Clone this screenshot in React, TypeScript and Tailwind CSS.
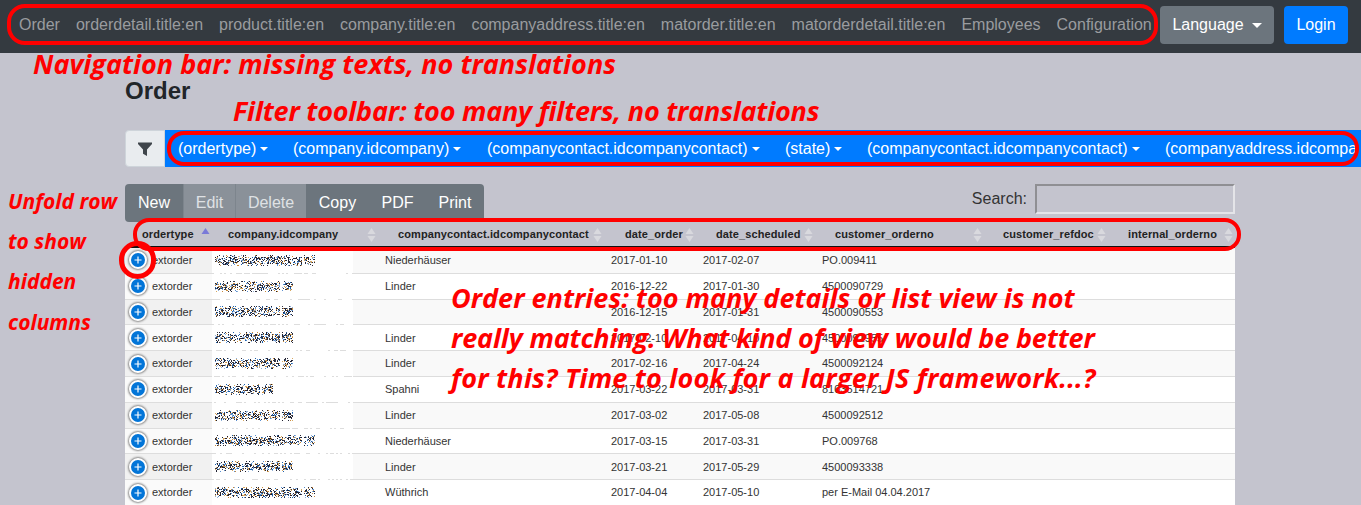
import React from "react";

const navLinks = ["Order", "orderdetail.title:en", "product.title:en", "company.title:en", "companyaddress.title:en", "matorder.title:en", "matorderdetail.title:en", "Employees", "Configuration"];
const filters = [
  { label: "(ordertype)", w: "w-[115px]" },
  { label: "(company.idcompany)", w: "w-[194px]" },
  { label: "(companycontact.idcompanycontact)", w: "w-[298px]" },
  { label: "(state)", w: "w-[82px]" },
  { label: "(companycontact.idcompanycontact)", w: "w-[298px]" },
  { label: "(companyaddress.idcompanyaddress)", w: "w-[191px] overflow-hidden" },
];
const headers = [
  { t: "ordertype", cls: "pl-[17px]", sort: "asc" },
  { t: "company.idcompany", cls: "pl-[16px]" },
  { t: "companycontact.idcompanycontact", cls: "pl-[20px]" },
  { t: "date_order", cls: "pl-[21px]" },
  { t: "date_scheduled", cls: "pl-[20px]" },
  { t: "customer_orderno", cls: "pl-[20px]" },
  { t: "customer_refdoc", cls: "pl-[19px]" },
  { t: "internal_orderno", cls: "pl-[20px]" },
];
const rows = [
  [100, "Niederhäuser", "2017-01-10", "2017-02-07", "PO.009411"],
  [78, "Linder", "2016-12-22", "2017-01-30", "4500090729"],
  [78, "", "2016-12-15", "2017-01-31", "4500090553"],
  [78, "Linder", "2017-02-10", "2017-04-10", "4500091955"],
  [78, "Linder", "2017-02-16", "2017-04-24", "4500092124"],
  [58, "Spahni", "2017-03-22", "2017-03-31", "8103514721"],
  [78, "Linder", "2017-03-02", "2017-05-08", "4500092512"],
  [100, "Niederhäuser", "2017-03-15", "2017-03-31", "PO.009768"],
  [78, "Linder", "2017-03-21", "2017-05-29", "4500093338"],
  [100, "Wüthrich", "2017-04-04", "2017-05-10", "per E-Mail 04.04.2017"],
] as const;

function rng(seed: number) {
  let s = seed * 9301 + 49297;
  return () => {
    s = (s * 9301 + 49297) % 233280;
    return s / 233280;
  };
}

function Noise({ width, seed }: { width: number; seed: number }) {
  const r = rng(seed);
  const colors = ["#1f1f2e", "#2b2b3a", "#1f1f2e", "#3a3a48", "#1c5fa8", "#c98a3a", "#2b2b3a", "#8fb0d8", "#d8a860", "#5a8fd0"];
  const gap = width - 14;
  const cells: React.ReactElement[] = [];
  for (let x = 0; x < width; x++) {
    if (x > gap && x < gap + 3) continue;
    for (let y = 0; y < 11; y++) {
      const edge = y < 2 || y > 8;
      if (r() < (edge ? 0.22 : 0.5)) {
        cells.push(<rect key={x + "-" + y} x={x} y={y} width="1" height="1" fill={colors[Math.floor(r() * colors.length)]} />);
      }
    }
  }
  return (
    <svg width={width} height="11" className="block" shapeRendering="crispEdges">
      {cells}
    </svg>
  );
}

function Haze({ seed }: { seed: number }) {
  const r = rng(seed);
  const cells: React.ReactElement[] = [];
  for (let x = 0; x < 141; x += 2) {
    if (r() < 0.6) cells.push(<rect key={x} x={x} y={r() < 0.5 ? 0 : 1} width="2" height="2" fill="#ffffff" />);
  }
  return (
    <svg width="141" height="3" className="absolute bottom-[-2px] left-0" shapeRendering="crispEdges">
      {cells}
    </svg>
  );
}

function SortIcon({ active }: { active?: boolean }) {
  return (
    <svg width="9" height="16" viewBox="0 0 9 16" className="absolute right-[2px] top-[5px]">
      <path d="M4.5 1 L8.5 7 L0.5 7 Z" fill={active ? "#7a7ad8" : "#d9d9de"} />
      {!active && <path d="M4.5 15 L8.5 9 L0.5 9 Z" fill="#d9d9de" />}
    </svg>
  );
}

function Caret({ size = "sm" }: { size?: "sm" | "lg" }) {
  return (
    <span className={size === "lg" ? "ml-[8px] inline-block border-x-[5px] border-t-[5px] border-x-transparent border-t-white align-[3px]" : "ml-[4px] inline-block border-x-[4px] border-t-[4px] border-x-transparent border-t-white align-[3px]"} />
  );
}

const grid = "grid grid-cols-[87px_166px_226px_92px_119px_169px_124px_127px]";
const note = "absolute whitespace-nowrap font-['Open_Sans',sans-serif] font-bold italic text-[#ff0000]";
const ring = "pointer-events-none absolute border-[4px] border-[#ff0000]";

export default function App() {
  return (
    <div className="relative h-[505px] overflow-hidden bg-[#c4c4ce] font-['Liberation_Sans',Arial,sans-serif] text-[#212529]">
      <nav className="flex h-[53px] items-start bg-[#343a40] pl-[11px] pr-[13px] pt-[6px]">
        <div className="flex h-[38px] flex-1 items-center text-[16px] text-[#9a9c9f]">
          {navLinks.map((l) => (
            <span key={l} className="whitespace-nowrap px-[8px]">{l}</span>
          ))}
        </div>
        <button className="mr-[10px] flex h-[38px] w-[114px] items-center justify-center rounded-[4px] bg-[#6c757d] text-[16px] text-white">
          Language<Caret size="lg" />
        </button>
        <button className="h-[38px] w-[64px] rounded-[4px] bg-[#007bff] text-[16px] text-white">Login</button>
      </nav>

      <main className="pl-[125px]">
        <h1 className="mt-[24px] h-[53px] text-[24px] font-bold leading-[28px]">Order</h1>
        <div className="flex h-[37px] overflow-hidden">
          <div className="flex w-[40px] shrink-0 items-center justify-center rounded-l-[4px] border border-[#ced4da] bg-[#e9ecef]">
            <svg width="16" height="16" viewBox="0 0 16 16"><path d="M1 1.5 H15 V3 L10 8.5 V15 L6 12.8 V8.5 L1 3 Z" fill="#3f454b" /></svg>
          </div>
          <div className="flex flex-1 items-center overflow-hidden bg-[#007bff] pl-[13px] text-[16px] text-white">
            {filters.map((f, i) => (
              <span key={i} className={"shrink-0 whitespace-nowrap " + f.w}>
                {f.label}
                {i < 5 && <Caret />}
              </span>
            ))}
          </div>
        </div>

        <div className="w-[1110px]">
          <div className="mt-[17px] flex h-[38px] items-start justify-between">
            <div className="flex h-[38px] overflow-hidden rounded-[4px] text-[16px]">
              <button className="w-[58px] bg-[#6c757d] text-white">New</button>
              <button className="w-[52px] border-l border-[#7d858d] bg-[#8a9199] text-[#dfe1e4]">Edit</button>
              <button className="w-[71px] border-l border-[#7d858d] bg-[#8a9199] text-[#dfe1e4]">Delete</button>
              <button className="w-[63px] bg-[#6c757d] text-white">Copy</button>
              <button className="w-[57px] bg-[#6c757d] text-white">PDF</button>
              <button className="w-[58px] bg-[#6c757d] text-white">Print</button>
            </div>
            <label className="flex h-[30px] items-center text-[16px] text-[#333]">
              Search:
              <span className="ml-[8px] block h-[30px] w-[200px] border-2 border-b-[#e4e4e8] border-l-[#8f8f93] border-r-[#e4e4e8] border-t-[#8f8f93]" />
            </label>
          </div>

          <div className={grid + " h-[26px] border-b-2 border-[#111] text-[11px] font-bold tracking-[0.1px] text-[#222]"}>
            {headers.map((h) => (
              <div key={h.t} className={"relative flex items-center whitespace-nowrap " + h.cls}>
                {h.t}
                <SortIcon active={h.sort === "asc"} />
              </div>
            ))}
          </div>

          {rows.map((r, i) => (
            <div key={i} className={grid + " h-[25.8px] items-stretch border-b border-[#dddddd] text-[11px] text-[#333] " + (i % 2 === 0 ? "bg-[#f9f9f9]" : "bg-white")}>
              <div className={"flex items-center pl-[4px] " + (i % 2 === 0 ? "bg-[#f1f1f1]" : "bg-[#fafafa]")}>
                <span className="mr-[5px] flex h-[18px] w-[18px] items-center justify-center rounded-full border-[2px] border-white bg-[#0275d8] shadow-[0_0_2px_1px_#888]">
                  <svg width="8" height="8" viewBox="0 0 8 8"><path d="M4 0.5 V7.5 M0.5 4 H7.5" stroke="#ffffff" strokeWidth="1.2" /></svg>
                </span>
                extorder
              </div>
              <div className="relative">
                <div className="flex h-full w-[141px] items-center bg-white pl-[3px]">
                  <Noise width={r[0] as number} seed={i * 37 + 11} />
                </div>
                {i < 9 && <Haze seed={i * 13 + 5} />}
              </div>
              <div className="flex items-center pl-[7px]">{r[1]}</div>
              <div className="flex items-center pl-[7px]">{r[2]}</div>
              <div className="flex items-center pl-[7px]">{r[3]}</div>
              <div className="flex items-center whitespace-nowrap pl-[7px]">{r[4]}</div>
              <div />
              <div />
            </div>
          ))}
        </div>
      </main>

      <div className={ring + " left-[7px] top-[4px] h-[41px] w-[1151px] rounded-[18px]"} />
      <div className={ring + " left-[167px] top-[131px] h-[35px] w-[1192px] rounded-[17px]"} />
      <div className={ring + " left-[133px] top-[218px] h-[33px] w-[1108px] rounded-[16px]"} />
      <div className={ring + " left-[119px] top-[241px] h-[38px] w-[37px] rounded-full border-[5px]"} />

      <div className={note + " left-[33px] top-[45px] text-[27px] leading-[38px]"}>Navigation bar: missing texts, no translations</div>
      <div className={note + " left-[233px] top-[92px] text-[27px] leading-[38px] tracking-[-0.22px]"}>Filter toolbar: too many filters, no translations</div>
      <div className={note + " left-[8px] top-[186px] text-[21px] leading-[30px]"}>Unfold row</div>
      <div className={note + " left-[8px] top-[226px] text-[21px] leading-[30px]"}>to show</div>
      <div className={note + " left-[8px] top-[266px] text-[21px] leading-[30px]"}>hidden</div>
      <div className={note + " left-[8px] top-[307px] text-[21px] leading-[30px]"}>columns</div>
      <div className={note + " left-[451px] top-[278px] text-[27px] leading-[40px]"}>Order entries: too many details or list view is not</div>
      <div className={note + " left-[451px] top-[318px] text-[27px] leading-[40px] tracking-[-0.16px]"}>really matching. What kind of view would be better</div>
      <div className={note + " left-[451px] top-[358px] text-[27px] leading-[40px] tracking-[0.21px]"}>for this? Time to look for a larger JS framework...?</div>
    </div>
  );
}
